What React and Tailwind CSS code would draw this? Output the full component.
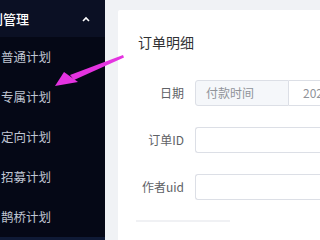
import React from 'react';

const menuItems = ['普通计划', '专属计划', '定向计划', '招募计划', '鹊桥计划'];

const FormRow = ({ label, children }) => (
  <div className="flex items-center h-[26px]">
    <div className="w-[46px] shrink-0 text-right text-[12px] text-[#606266] whitespace-nowrap">{label}</div>
    <div className="ml-[11px] flex-1 flex">{children}</div>
  </div>
);

const App = () => {
  return (
    <div
      className="relative w-[320px] h-[240px] overflow-hidden flex bg-[#f0f2f5]"
      style={{ fontFamily: '"Noto Sans CJK SC", "Noto Sans", sans-serif' }}
    >
      {/* 侧边栏 */}
      <aside className="w-[105px] shrink-0 h-full flex flex-col bg-[#050816] overflow-hidden">
        <div className="h-[37px] shrink-0 flex items-center bg-[#0b1024] pr-[15px]">
          <span className="ml-[-23px] text-[13px] font-medium text-white whitespace-nowrap">计划管理</span>
          <svg className="ml-auto" width="8" height="6" viewBox="0 0 8 6">
            <path d="M1 5 L4 2 L7 5" stroke="#ffffff" strokeWidth="1.6" fill="none" />
          </svg>
        </div>
        {menuItems.map((item) => (
          <div key={item} className="h-10 shrink-0 flex items-center pl-[1px]">
            <span className="text-[12.5px] text-[#c0c6d3] whitespace-nowrap">{item}</span>
          </div>
        ))}
        <div className="flex-1 bg-[#0f1a36]" />
      </aside>

      {/* 主内容 */}
      <main className="flex-1 pl-[13px] pt-[10px]">
        <div className="h-full bg-white rounded-tl-[2px] pl-5 pt-[24px]">
          <h2 className="text-[14px] leading-[16px] text-[#303133] whitespace-nowrap">订单明细</h2>

          <div className="mt-[30px] flex flex-col gap-[21px]">
            <FormRow label="日期">
              <div className="w-[94px] h-[26px] shrink-0 flex items-center pl-[10px] bg-[#f5f7fa] border border-[#dcdfe6] rounded-l-[3px] text-[12px] text-[#909399] whitespace-nowrap">
                付款时间
              </div>
              <div className="flex-1 h-[26px] flex items-center pl-[14px] border-y border-[#dcdfe6] text-[12px] text-[#909399] whitespace-nowrap">
                2021-
              </div>
            </FormRow>
            <FormRow label="订单ID">
              <div className="flex-1 h-[26px] border border-[#dcdfe6] border-r-0 rounded-l-[3px]" />
            </FormRow>
            <FormRow label="作者uid">
              <div className="flex-1 h-[26px] border border-[#dcdfe6] border-r-0 rounded-l-[3px]" />
            </FormRow>
          </div>

          <div className="mt-[20px] ml-[-2px] w-[94px] h-[2px] bg-[#f0f1f4]" />
        </div>
      </main>

      {/* 标注箭头 */}
      <svg className="absolute left-0 top-0 pointer-events-none" width="320" height="240" viewBox="0 0 320 240">
        <polygon points="70,75 123,55 124,57.5 74,80" fill="#e433e0" />
        <polygon points="55,86 64,72 78,82" fill="#e433e0" />
      </svg>
    </div>
  );
};

export default App;
